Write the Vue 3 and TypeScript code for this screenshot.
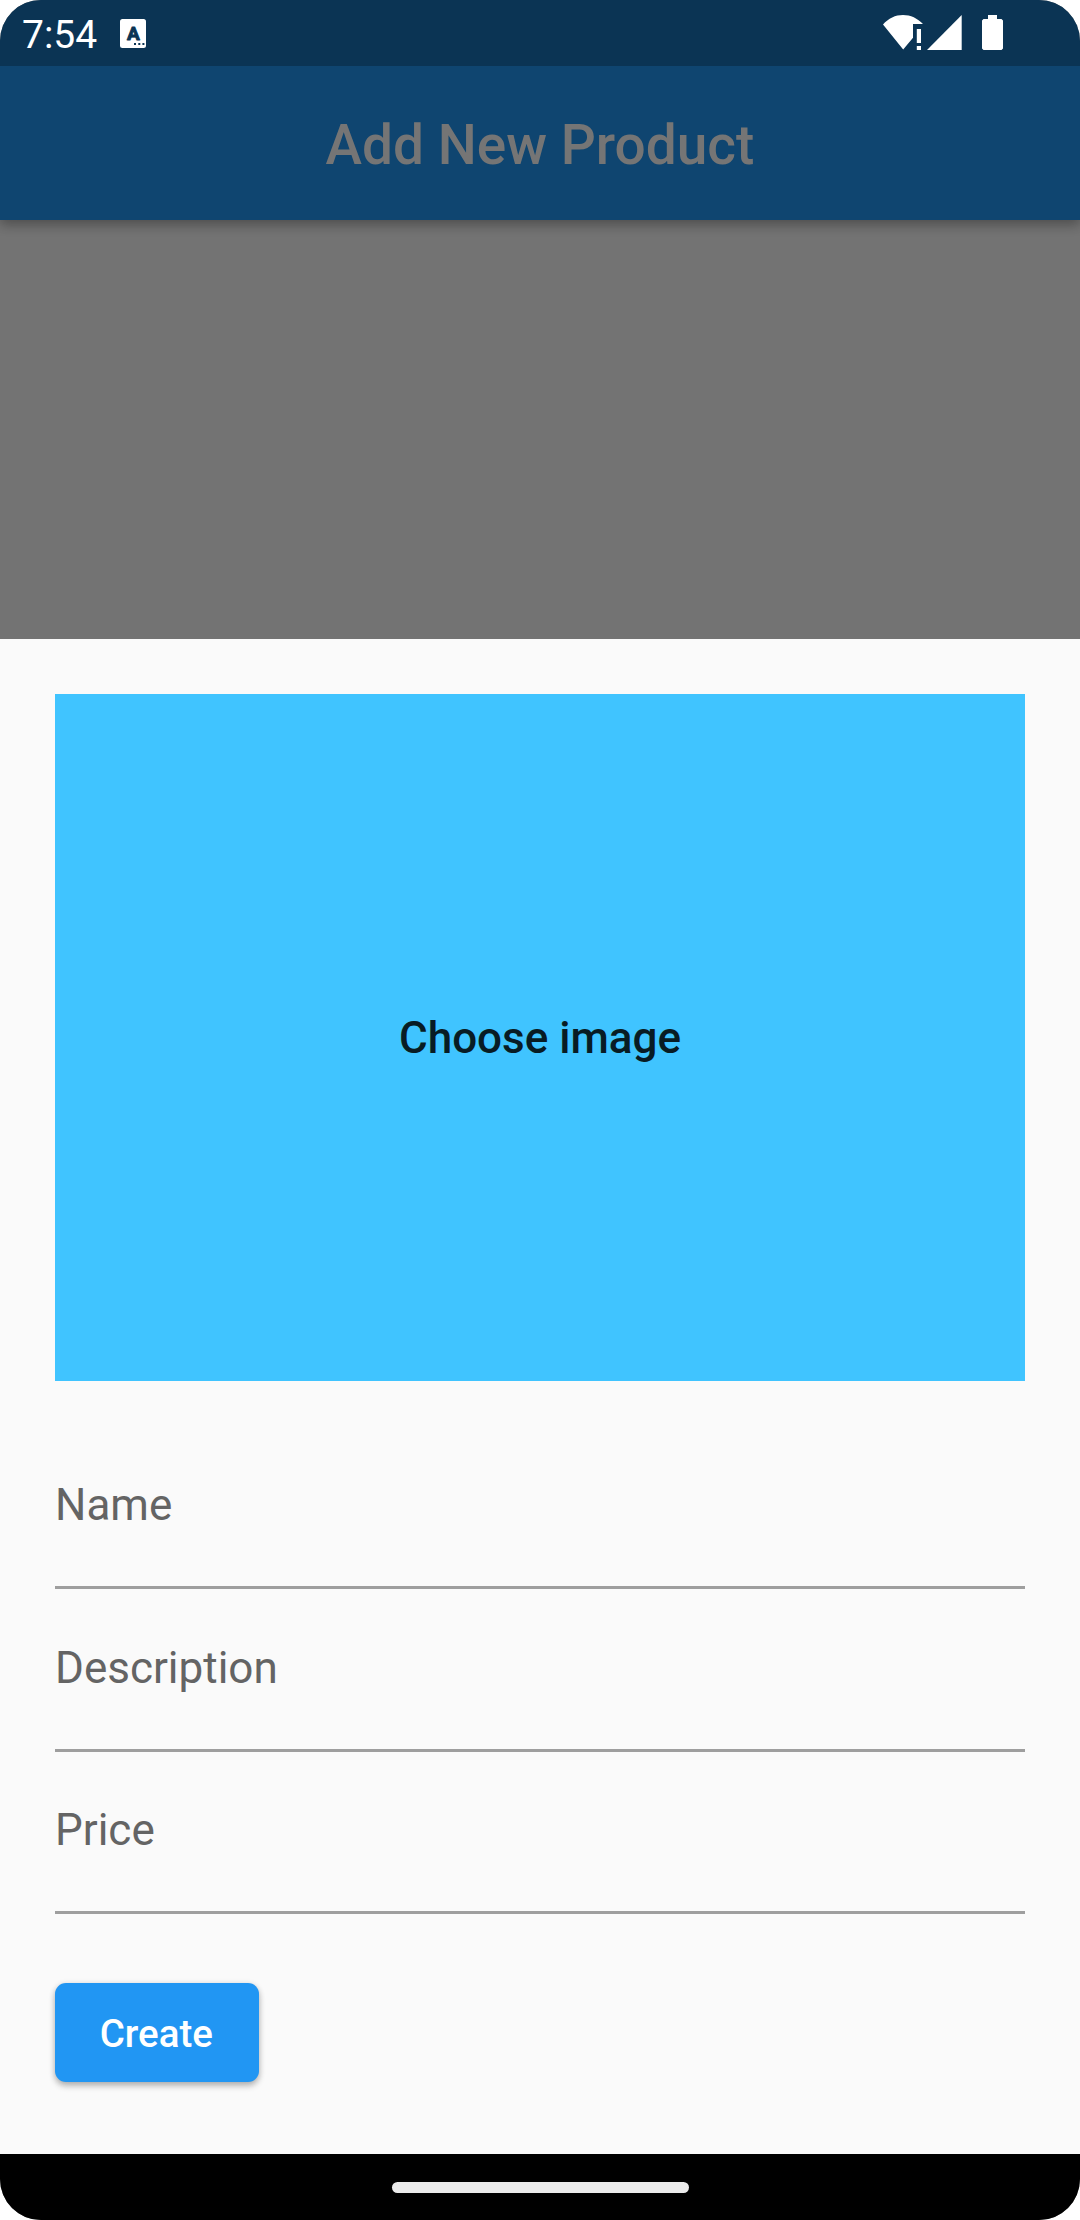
<script setup lang="ts">
import { ref } from 'vue'

interface Field {
  id: string
  label: string
}

const time = ref('7:54')
const fields: Field[] = [
  { id: 'name', label: 'Name' },
  { id: 'description', label: 'Description' },
  { id: 'price', label: 'Price' },
]
</script>

<template>
  <div class="screen">
    <header class="status-bar">
      <span class="time">{{ time }}</span>
      <svg class="keyboard-icon" width="26" height="29" viewBox="0 0 26 29">
        <rect width="26" height="29" rx="2.5" fill="#fff" />
        <text x="13.3" y="20.8" text-anchor="middle" class="glyph">A</text>
        <path d="M14 24h2v2h-2zM18.3 24h2v2h-2zM22.4 24h2v2h-2z" fill="#0b3454" />
      </svg>
      <div class="system-icons">
        <svg width="79" height="36" viewBox="0 0 79 36" fill="#fff">
          <path d="M0 9.5C5.5 3.3 12.4 0 20 0S34.5 3.3 40 9H30V22.7L20.2 34.5Z" />
          <path d="M33.8 14h4.2v14h-4.2zM33.8 31h4.2v4h-4.2z" />
          <path d="M44 35 78.7 0V35Z" />
        </svg>
        <svg width="21" height="35" viewBox="0 0 21 35" fill="#fff">
          <path d="M6 0h9v4h4.5L21 5.5v28L19.5 35h-18L0 33.5v-28L1.5 4H6Z" />
        </svg>
      </div>
    </header>

    <div class="app-bar">
      <h1>Add New Product</h1>
    </div>
    <div class="backdrop"></div>

    <main class="sheet">
      <div class="picker">Choose image</div>
      <form class="form" @submit.prevent>
        <label v-for="field in fields" :key="field.id" class="field">
          <span>{{ field.label }}</span>
        </label>
        <button class="create" type="button">Create</button>
      </form>
    </main>

    <footer class="nav-bar">
      <div class="handle"></div>
    </footer>
  </div>
</template>

<style>
body {
  background: #fff;
}
</style>

<style scoped>
.screen {
  display: flex;
  flex-direction: column;
  width: 1080px;
  height: 2220px;
  overflow: hidden;
  border-radius: 41px;
  background: #737373;
  font-family: Roboto, 'Liberation Sans', sans-serif;
}

.status-bar {
  position: relative;
  z-index: 1;
  display: flex;
  flex: none;
  align-items: flex-start;
  box-sizing: border-box;
  height: 66px;
  padding-left: 22px;
  background: #0b3454;
}

.time {
  width: 98px;
  margin-top: 12px;
  color: #fff;
  font-size: 39px;
  line-height: 46px;
}

.keyboard-icon {
  margin-top: 19px;
}

.glyph {
  fill: #0b3454;
  stroke: #0b3454;
  stroke-width: 0.9;
  stroke-linejoin: round;
  font: 700 19px Roboto, sans-serif;
}

.system-icons {
  display: flex;
  gap: 20px;
  margin: 15px 77px 0 auto;
}

.app-bar {
  display: flex;
  flex: none;
  align-items: center;
  justify-content: center;
  height: 154px;
  background: #0f4570;
  box-shadow: 0 5px 11px rgba(0, 0, 0, 0.24), 0 2px 14px rgba(0, 0, 0, 0.12);
}

h1 {
  margin: 4px 0 0;
  color: #757575;
  font-size: 55px;
  font-weight: 500;
  line-height: 64px;
}

.backdrop {
  flex: none;
  height: 418.5px;
}

.sheet {
  flex: 1;
  box-sizing: border-box;
  padding: 55px 55px 0;
  background: #fafafa;
}

.picker {
  display: flex;
  align-items: center;
  justify-content: center;
  box-sizing: border-box;
  height: 687.5px;
  padding-top: 1px;
  background: #40c4ff;
  color: #081c24;
  font-size: 44px;
  font-weight: 500;
}

.form {
  padding-top: 46px;
}

.field {
  display: block;
  box-sizing: border-box;
  height: 162.25px;
  padding-top: 52.4px;
  border-bottom: 3px solid #9e9e9e;
  color: #646464;
  font-size: 44px;
  line-height: 52px;
}

.create {
  display: block;
  width: 203.5px;
  height: 99px;
  margin-top: 69.5px;
  padding: 2px 1px 0 0;
  border: 0;
  border-radius: 11px;
  background: #2196f3;
  box-shadow: 0 4px 6px rgba(0, 0, 0, 0.24), 0 1px 6px rgba(0, 0, 0, 0.12);
  color: #fff;
  font-family: inherit;
  font-size: 38.5px;
  font-weight: 500;
}

.nav-bar {
  display: flex;
  flex: none;
  align-items: center;
  justify-content: center;
  height: 66px;
  background: #000;
}

.handle {
  width: 297px;
  height: 11px;
  border-radius: 6px;
  background: #ebebeb;
}
</style>
